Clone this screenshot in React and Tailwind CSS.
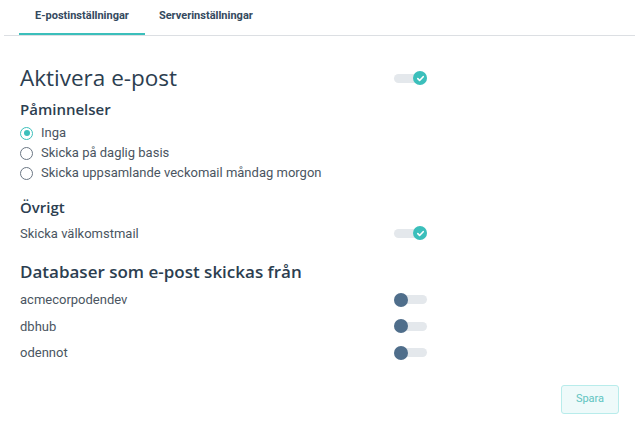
import React, { useState } from 'react';

const Toggle = ({ on }) => (
  <div className="relative w-[33px] h-[14px] flex items-center">
    <div className="w-full h-[9px] rounded-full bg-[#e4e8ec]" />
    {on ? (
      <div className="absolute right-0 w-[14px] h-[14px] rounded-full bg-[#3bbfbb] flex items-center justify-center">
        <svg width="9" height="9" viewBox="0 0 10 10" fill="none">
          <path d="M2 5.2l2 2L8 3" stroke="white" strokeWidth="1.8" strokeLinecap="round" strokeLinejoin="round" />
        </svg>
      </div>
    ) : (
      <div className="absolute left-0 w-[14px] h-[14px] rounded-full bg-[#4f6e8b]" />
    )}
  </div>
);

const Radio = ({ checked, label }) => (
  <label className="flex items-center gap-[8px] h-[20px]">
    {checked ? (
      <span className="w-[13px] h-[13px] rounded-full border-[1.5px] border-[#3bbfbb] flex items-center justify-center">
        <span className="w-[6px] h-[6px] rounded-full bg-[#3bbfbb]" />
      </span>
    ) : (
      <span className="w-[13px] h-[13px] rounded-full border-[1.5px] border-[#6b7683]" />
    )}
    <span className="text-[13px] text-[#4a5561]">{label}</span>
  </label>
);

const Row = ({ label, on }) => (
  <div className="flex items-center justify-between w-[407px] h-[26.5px]">
    <span className="text-[13px] text-[#4a5561]">{label}</span>
    <Toggle on={on} />
  </div>
);

export default function App() {
  const [tab] = useState(0);
  const dbs = ['acmecorpodendev', 'dbhub', 'odennot'];

  return (
    <div className="w-[635px] h-[426px] bg-white font-['Roboto',sans-serif] text-[#4a5561]">
      <div className="flex ml-[4px] border-b border-[#dcdfe3] h-[36px] items-stretch">
        <div className={`ml-[15px] px-[16px] flex items-center text-[11px] font-bold text-[#34495e] border-b-2 ${tab === 0 ? 'border-[#3bbfbb]' : 'border-transparent'}`}>
          E-postinställningar
        </div>
        <div className="px-[14px] flex items-center text-[11px] font-bold text-[#34495e] border-b-2 border-transparent">
          Serverinställningar
        </div>
      </div>

      <div className="pl-[20px] pt-[28px]">
        <div className="flex items-center justify-between w-[407px]">
          <h1 className="font-['Open_Sans',sans-serif] text-[22.5px] font-medium text-[#2c3e50] leading-[28px]">Aktivera e-post</h1>
          <Toggle on />
        </div>

        <h2 className="mt-[7px] font-['Open_Sans',sans-serif] text-[15px] font-semibold text-[#2c3e50] leading-[20px]">Påminnelser</h2>
        <div className="mt-[4px] flex flex-col">
          <Radio checked label="Inga" />
          <Radio label="Skicka på daglig basis" />
          <Radio label="Skicka uppsamlande veckomail måndag morgon" />
        </div>

        <h2 className="mt-[14px] font-['Open_Sans',sans-serif] text-[15px] font-semibold text-[#2c3e50] leading-[20px]">Övrigt</h2>
        <div className="mt-[3px]">
          <Row label="Skicka välkomstmail" on />
        </div>

        <h2 className="mt-[13px] font-['Open_Sans',sans-serif] text-[17px] font-semibold text-[#2c3e50] leading-[24px]">Databaser som e-post skickas från</h2>
        <div className="mt-[3px] flex flex-col">
          {dbs.map((d) => (
            <Row key={d} label={d} />
          ))}
        </div>

        <div className="flex justify-end w-[599px] mt-[19px]">
          <button className="w-[58px] h-[29px] rounded-[3px] border border-[#b8eceb] bg-[#eefafa] text-[11px] text-[#5fc4c1]">
            Spara
          </button>
        </div>
      </div>
    </div>
  );
}
